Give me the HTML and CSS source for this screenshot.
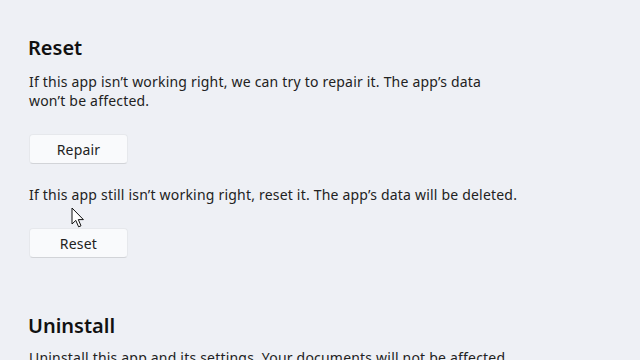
FILE: index.html
```html
<!DOCTYPE html>
<html>
<head>
<meta charset="utf-8">
<link rel="stylesheet" href="styles.css">
</head>
<body>
<main class="page">
  <section class="section">
    <h2 class="title">Reset</h2>
    <p class="desc">If this app isn’t working right, we can try to repair it. The app’s data<br>won’t be affected.</p>
    <button class="btn">Repair</button>
    <p class="desc desc-2">If this app still isn’t working right, reset it. The app’s data will be deleted.</p>
    <button class="btn">Reset</button>
  </section>
  <section class="section uninstall">
    <h2 class="title">Uninstall</h2>
    <p class="desc desc-3">Uninstall this app and its settings. Your documents will not be affected.</p>
  </section>
</main>
<svg class="cursor" width="14" height="22" viewBox="0 0 14 22">
  <path d="M1 1 L1 17 L4.8 13.4 L7.6 19.8 L10 18.8 L7.3 12.6 L12.4 12.6 Z" fill="#fff" stroke="#111" stroke-width="1" stroke-linejoin="round"/>
</svg>
</body>
</html>
```
FILE: styles.css
```css
html, body {
  margin: 0;
  padding: 0;
  background: #eef0f5;
  width: 640px;
  height: 360px;
  overflow: hidden;
}
body {
  position: relative;
  font-family: "Noto Sans", "Open Sans", sans-serif;
  color: #1b1b1b;
}
.page {
  padding: 34px 0 0 28px;
  display: flex;
  flex-direction: column;
}
.section {
  display: flex;
  flex-direction: column;
  align-items: flex-start;
}
.title {
  margin: 0;
  font-size: 20px;
  font-weight: 600;
  line-height: 28px;
  color: #111;
}
.desc {
  margin: 10px 0 0 1px;
  font-size: 14px;
  letter-spacing: 0.2px;
  line-height: 19px;
  color: #222;
  white-space: nowrap;
}
.desc-2 {
  margin-top: 21px;
}
.desc-3 {
  margin-top: 8px;
}
.btn {
  margin: 24px 0 0 1px;
  width: 99px;
  height: 30px;
  padding: 0;
  font-family: inherit;
  font-size: 14px;
  letter-spacing: 0.2px;
  color: #222;
  background: #f9fafc;
  border: 1px solid #e6e8ec;
  border-bottom-color: #d2d4d8;
  border-radius: 4px;
}
.uninstall {
  margin-top: 54px;
}
.cursor {
  position: absolute;
  left: 71px;
  top: 207px;
}
```
